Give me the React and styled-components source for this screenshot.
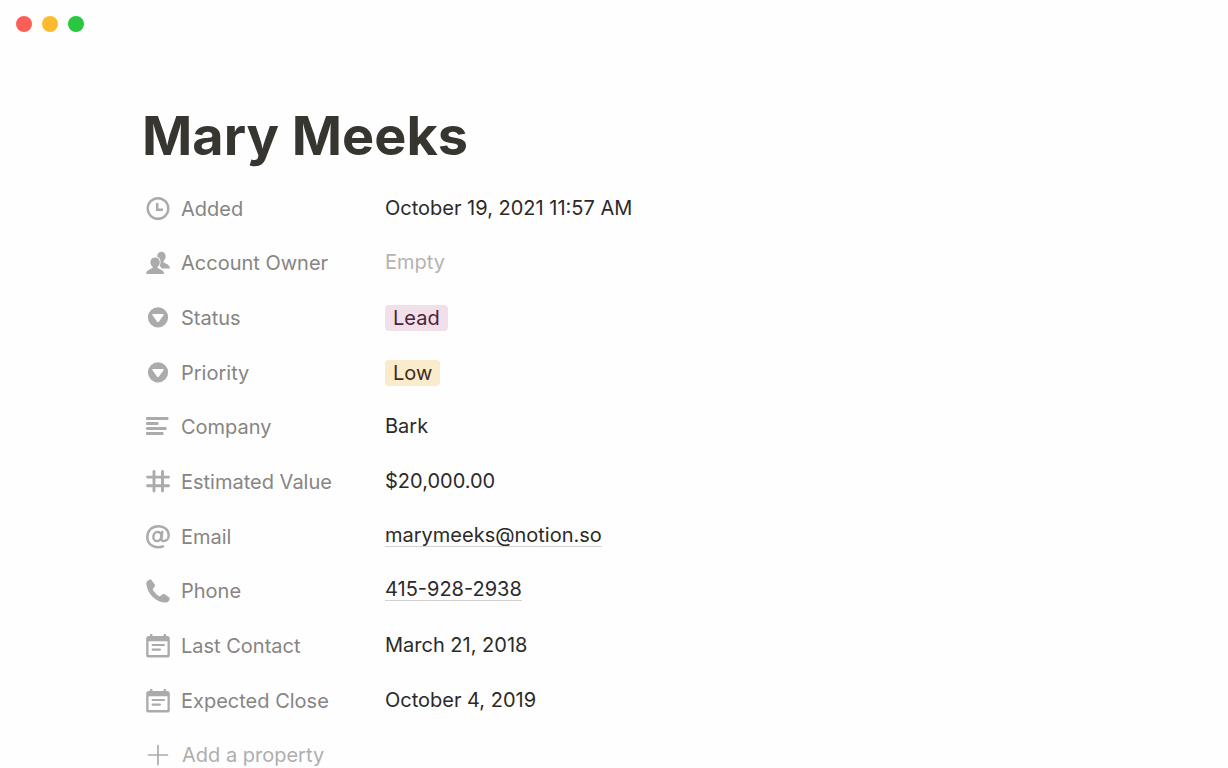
import React from 'react';
import styled, { createGlobalStyle } from 'styled-components';

const properties = [
    { name: 'Added', icon: 'clock', value: 'October 19, 2021 11:57 AM' },
    { name: 'Account Owner', icon: 'person', value: 'Empty', type: 'empty' },
    { name: 'Status', icon: 'select', value: 'Lead', type: 'tag', color: '#f1dfe9', text: '#4c2337' },
    { name: 'Priority', icon: 'select', value: 'Low', type: 'tag', color: '#faebcd', text: '#402c1b' },
    { name: 'Company', icon: 'text', value: 'Bark' },
    { name: 'Estimated Value', icon: 'number', value: '$20,000.00' },
    { name: 'Email', icon: 'email', value: 'marymeeks@notion.so', type: 'link', href: 'mailto:marymeeks@notion.so' },
    { name: 'Phone', icon: 'phone', value: '415-928-2938', type: 'link', href: 'tel:415-928-2938' },
    { name: 'Last Contact', icon: 'date', value: 'March 21, 2018' },
    { name: 'Expected Close', icon: 'date', value: 'October 4, 2019' },
];

const icons = {
    clock: (
        <g fill="none" stroke="currentColor">
            <circle cx="12" cy="11.5" r="10.3" strokeWidth="2.4" />
            <path d="M11.2 6v6.7h5.8" strokeWidth="2.6" />
        </g>
    ),
    person: (
        <g>
            <ellipse cx="15.4" cy="5.6" rx="4.3" ry="4.8" />
            <path d="M13.4 8h4.2v3.200c.4 1.300 6.300 1.500 6.300 6.400h-8l-4-5z" />
            <path
                d="M9.100 6.400c2.800 0 4.700 2 4.700 4.800 0 1.900-.9 3.600-2.200 4.500v1c.3 1.300 6.500 1.600 6.500 6.400H.100c0-4.800 6.200-5.100 6.500-6.400v-1c-1.300-.9-2.200-2.600-2.200-4.500 0-2.800 2-4.800 4.700-4.800z"
                stroke="#fefefe"
                strokeWidth="1.6"
                paintOrder="stroke"
            />
        </g>
    ),
    select: (
        <path
            fillRule="evenodd"
            d="M12 1.300a10.100 10.100 0 1 0 0 20.200 10.100 10.100 0 0 0 0-20.200zM7.100 7.900h9.800c.7 0 1 .7.600 1.300l-4.700 6.600c-.4.500-1.200.5-1.600 0L6.500 9.200c-.4-.6-.1-1.300.6-1.300z"
        />
    ),
    text: (
        <g>
            <rect x="0" y="2" width="22.5" height="3" rx="1" />
            <rect x="0" y="7" width="12.5" height="3" rx="1" />
            <rect x="0" y="12" width="20.5" height="3" rx="1" />
            <rect x="0" y="17" width="17.5" height="3" rx="1" />
        </g>
    ),
    number: (
        <path
            d="M8 1.500v19.500M16.500 1.500v19.500M1.500 7.100h21M1.500 15.700h21"
            fill="none"
            stroke="currentColor"
            strokeWidth="2.9"
            strokeLinecap="round"
        />
    ),
    email: (
        <g fill="none" stroke="currentColor" strokeWidth="2.4" strokeLinecap="round">
            <ellipse cx="11.4" cy="11.5" rx="4" ry="4.6" transform="rotate(12 11.4 11.5)" />
            <path d="M16.300 6.900l-.9 6.600c-.1 1.600.7 2.500 2.200 2.500 3.100 0 5.100-2.300 5.100-5.700C22.700 5 18.300 1.200 12.600 1.200 6.100 1.200 1.300 5.500 1.300 12c0 6.200 4.200 10.200 10.700 10.200 1.800 0 3.600-.3 5.100-.8" />
        </g>
    ),
    phone: (
        <path d="M3.100.8C1.300 1.500.1 3.100.3 5.100c.6 5 2.700 9.200 6.200 12.600 3.400 3.400 7.300 5.300 12.200 5.900 1.900.2 3.700-.9 4.700-2.700.5-.9.400-1.900-.4-2.600l-4.200-3c-.8-.5-1.700-.5-2.400.1l-2 1.600c-.5.400-1.100.4-1.700 0-2.200-1.500-4.200-3.500-5.700-5.700-.4-.6-.4-1.100 0-1.600l1.500-2c.6-.8.600-1.700.1-2.500L5.700 1.300C5.100.4 4.100.4 3.100.8z" />
    ),
    date: (
        <g>
            <path
                fillRule="evenodd"
                d="M5.200 0c.8 0 1.300.5 1.300 1.200v.7h11v-.7c0-.7.500-1.200 1.300-1.200s1.300.5 1.300 1.200v.7h1.300c1.400 0 2.400 1 2.400 2.400v16.900c0 1.400-1 2.400-2.400 2.400H2.600c-1.400 0-2.400-1-2.400-2.400V4.300c0-1.400 1-2.400 2.400-2.400h1.300v-.7C3.900.5 4.400 0 5.200 0zM2.500 7.200v13.400c0 .3.200.5.500.5h18c.3 0 .5-.2.500-.5V7.200z"
            />
            <path
                d="M6.600 11h11.400M6.600 15.600h7.400"
                fill="none"
                stroke="currentColor"
                strokeWidth="2.1"
                strokeLinecap="round"
            />
        </g>
    ),
    plus: <path d="M12 2.500v19M2.500 12h19" fill="none" stroke="currentColor" strokeWidth="1.7" strokeLinecap="round" />,
};

const Icon = ({ name }) => (
    <IconSvg viewBox="0 0 24 24" aria-hidden="true">
        {icons[name]}
    </IconSvg>
);

const PropertyValue = ({ property }) => {
    if (property.type === 'tag') {
        return (
            <Tag $color={property.color} $text={property.text}>
                {property.value}
            </Tag>
        );
    }
    if (property.type === 'link') {
        return <ValueLink href={property.href}>{property.value}</ValueLink>;
    }
    return <ValueText $empty={property.type === 'empty'}>{property.value}</ValueText>;
};

export default function App() {
    return (
        <Page>
            <GlobalStyle />
            {/* WINDOW CONTROLS */}
            <TitleBar>
                <WindowButton $color="#fb5f58" aria-label="Close" />
                <WindowButton $color="#fcbb2d" aria-label="Minimize" />
                <WindowButton $color="#28c740" aria-label="Zoom" />
            </TitleBar>
            <Content>
                <Title>Mary Meeks</Title>
                {/* PROPERTIES */}
                <PropertyList>
                    {properties.map((property) => (
                        <PropertyRow key={property.name}>
                            <PropertyName>
                                <Icon name={property.icon} />
                                {property.name}
                            </PropertyName>
                            <PropertyData>
                                <PropertyValue property={property} />
                            </PropertyData>
                        </PropertyRow>
                    ))}
                </PropertyList>
                <AddButton type="button">
                    <Icon name="plus" />
                    Add a property
                </AddButton>
            </Content>
        </Page>
    );
}

const GlobalStyle = createGlobalStyle`
    body {
        margin: 0;
        background: #fefefe;
        font-family: Inter, 'Liberation Sans', sans-serif;
        font-size: 20px;
        line-height: 26px;
    }

    * {
        box-sizing: border-box;
    }
`;

const Page = styled.main`
    min-height: 100vh;
`;

const TitleBar = styled.header`
    display: flex;
    align-items: center;
    gap: 10px;
    height: 48px;
    padding: 0 16px;
`;

const WindowButton = styled.button`
    width: 16px;
    height: 16px;
    padding: 0;
    border: 0;
    border-radius: 50%;
    background: ${({ $color }) => $color};
`;

const Content = styled.article`
    padding: 54px 48px 0 146px;
`;

const Title = styled.h1`
    margin: 0 0 12px -4px;
    color: #37352f;
    font-size: 54px;
    font-weight: 700;
    line-height: 68px;
`;

const PropertyList = styled.dl`
    margin: 0;
`;

const PropertyRow = styled.div`
    display: grid;
    grid-template-columns: 239px 1fr;
    align-items: start;
    height: 55px;
    padding-top: 14px;

    &:nth-child(3n + 1) {
        height: 54px;
    }
`;

const PropertyName = styled.dt`
    display: flex;
    align-items: center;
    gap: 11px;
    color: #868584;
`;

const IconSvg = styled.svg`
    flex: none;
    width: 24px;
    height: 24px;
    color: #acabaa;
    fill: currentColor;
`;

const PropertyData = styled.dd`
    display: flex;
    margin: 0;
`;

const ValueText = styled.span`
    color: ${({ $empty }) => ($empty ? '#b4b3b2' : '#2b2a28')};
    line-height: 24px;
`;

const ValueLink = styled.a`
    border-bottom: 1px solid #d2d1d0;
    color: #2b2a28;
    line-height: 22px;
    text-decoration: none;
`;

const Tag = styled.span`
    padding: 0 8px;
    border-radius: 4px;
    background: ${({ $color }) => $color};
    color: ${({ $text }) => $text};
`;

const AddButton = styled.button`
    display: flex;
    align-items: center;
    gap: 12px;
    padding: 14px 0 0;
    border: 0;
    background: none;
    color: #afaead;
    font: inherit;
`;
